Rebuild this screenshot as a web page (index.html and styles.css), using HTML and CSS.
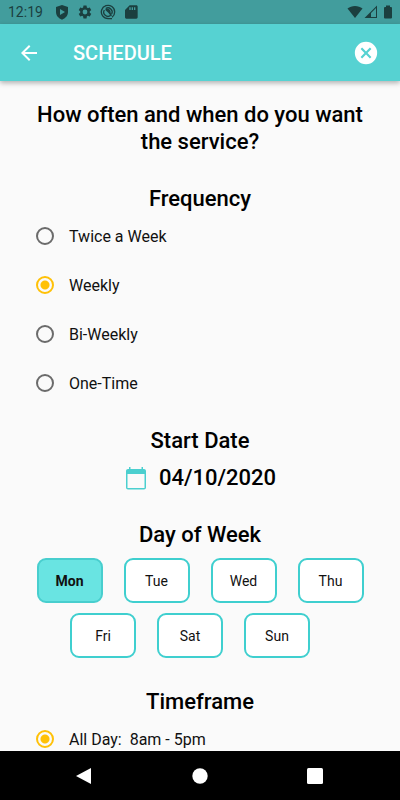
FILE: index.html
```html
<!DOCTYPE html>
<html lang="en">
<head>
<meta charset="utf-8">
<meta name="viewport" content="width=device-width, initial-scale=1">
<title>Schedule</title>
<link rel="stylesheet" href="styles.css">
</head>
<body>
<div class="status-bar">
  <span class="clock">12:19</span>
  <div class="notifications">
    <svg width="16" height="16" viewBox="0 0 24 24" aria-hidden="true"><path fill-rule="evenodd" d="M12 1.500 3 4.500v7.500c0 5.500 3.800 9.500 9 11.500 5.200-2 9-6 9-11.500V4.500zM9 7.500l7.500 4.500L9 16.500z"/></svg>
    <svg width="16" height="16" viewBox="0 0 24 24" aria-hidden="true"><path d="M19.140 12.940c.04-.3.060-.61.060-.94s-.02-.64-.07-.94l2.030-1.580a.49.49 0 0 0 .12-.61l-1.920-3.320a.49.49 0 0 0-.59-.22l-2.390.96c-.5-.38-1.030-.7-1.620-.94l-.36-2.540A.48.48 0 0 0 13.920 2.400h-3.840c-.24 0-.43.17-.47.41l-.36 2.540c-.59.24-1.130.57-1.620.94l-2.390-.96a.48.48 0 0 0-.59.22L2.740 8.870c-.12.21-.08.47.12.61l2.030 1.580c-.05.3-.09.63-.09.94s.02.640.07.940l-2.030 1.580a.49.49 0 0 0-.12.610l1.920 3.320c.12.220.37.290.59.220l2.390-.96c.5.380 1.030.7 1.620.940l.36 2.540c.05.240.24.410.48.410h3.840c.24 0 .44-.17.47-.41l.36-2.540c.59-.24 1.130-.56 1.620-.94l2.390.96c.22.080.47 0 .59-.22l1.920-3.320a.48.48 0 0 0-.12-.61zM12 15.600a3.600 3.600 0 1 1 0-7.200 3.600 3.600 0 0 1 0 7.200z"/></svg>
    <svg width="16" height="16" viewBox="0 0 24 24" aria-hidden="true"><path class="ring" d="M18 20A10 10 0 1 0 12 22H18"/><path class="ring" d="M6.500 9a6.300 6.300 0 0 0 9.500 8M8.500 6.800a6.300 6.300 0 0 1 9 8.200"/><path d="M7.500 8.500c4-3 9-.5 8.500 5l2 3.500-1.500 1.500-4-5.500z"/></svg>
    <svg width="16" height="16" viewBox="0 0 24 24" aria-hidden="true"><path fill-rule="evenodd" d="M20 2H10L3 9v11c0 1.100.9 2 2 2h15c1.100 0 2-.9 2-2V4c0-1.100-.9-2-2-2zM9.500 5h2v4h-2zM13 5h2v4h-2zM16.500 5h2v4h-2z"/></svg>
  </div>
  <div class="signals">
    <svg width="16" height="16" viewBox="0 0 16 16" aria-hidden="true"><path d="M.5 4.500C4.500 1 11.500 1 15.500 4.500L8 14z"/></svg>
    <svg width="14" height="16" viewBox="0 0 14 16" aria-hidden="true"><path fill-rule="evenodd" d="M13 1.500V14H.5zM12 4 7 9V13H12z"/></svg>
    <svg class="battery" width="10" height="16" viewBox="0 0 10 16" aria-hidden="true"><path d="M3 1.500h4V3h1q1 0 1 1v9.500q0 1-1 1H2q-1 0-1-1V4q0-1 1-1h1z"/></svg>
  </div>
</div>
<header class="app-bar">
  <button class="icon-button" type="button" aria-label="Back">
    <svg width="24" height="24" viewBox="0 0 24 24" aria-hidden="true"><path d="M20 11H7.830l5.590-5.590L12 4l-8 8 8 8 1.410-1.410L7.830 13H20z"/></svg>
  </button>
  <h1 class="app-title">SCHEDULE</h1>
  <button class="icon-button" type="button" aria-label="Cancel">
    <svg width="26" height="26" viewBox="0 0 24 24" aria-hidden="true"><path d="M12 1.700A10.300 10.300 0 1 0 22.300 12 10.300 10.300 0 0 0 12 1.700zm5 13.890L15.590 17 12 13.410 8.410 17 7 15.590 10.590 12 7 8.410 8.410 7 12 10.590 15.590 7 17 8.410 13.410 12z"/></svg>
  </button>
</header>
<main class="content">
  <h2 class="heading question">How often and when do you want the service?</h2>

  <h2 class="heading" id="frequency">Frequency</h2>
  <div class="options" role="radiogroup" aria-labelledby="frequency">
    <label class="option"><input class="radio" type="radio" name="frequency">Twice a Week</label>
    <label class="option"><input class="radio" type="radio" name="frequency" checked>Weekly</label>
    <label class="option"><input class="radio" type="radio" name="frequency">Bi-Weekly</label>
    <label class="option"><input class="radio" type="radio" name="frequency">One-Time</label>
  </div>

  <h2 class="heading after-options">Start Date</h2>
  <button class="date" type="button">
    <svg width="24" height="25" viewBox="0 0 24 25" aria-hidden="true"><path d="M20 4h-1V2h-1.500v2h-11V2H5v2H4c-1.100 0-2 .9-2 2v16.500c0 1.100.9 2 2 2h16c1.100 0 2-.9 2-2V6c0-1.100-.9-2-2-2zm.5 19h-17V9h17z"/></svg>
    04/10/2020
  </button>

  <h2 class="heading">Day of Week</h2>
  <div class="days">
    <div class="day-row">
      <button class="day selected" type="button" aria-pressed="true">Mon</button>
      <button class="day" type="button">Tue</button>
      <button class="day" type="button">Wed</button>
      <button class="day" type="button">Thu</button>
    </div>
    <div class="day-row short">
      <button class="day" type="button">Fri</button>
      <button class="day" type="button">Sat</button>
      <button class="day" type="button">Sun</button>
    </div>
  </div>

  <h2 class="heading" id="timeframe">Timeframe</h2>
  <div class="options" role="radiogroup" aria-labelledby="timeframe">
    <label class="option"><input class="radio" type="radio" name="timeframe" checked>All Day:&nbsp; 8am - 5pm</label>
  </div>
</main>
<nav class="system-nav" aria-label="System">
  <button class="nav-button" type="button" aria-label="Back"><svg width="18" height="18" viewBox="0 0 18 18" aria-hidden="true"><path d="M15 1v16L0 9z"/></svg></button>
  <button class="nav-button" type="button" aria-label="Home"><svg width="18" height="18" viewBox="0 0 18 18" aria-hidden="true"><circle cx="9" cy="9" r="7.700"/></svg></button>
  <button class="nav-button" type="button" aria-label="Recent apps"><svg width="18" height="18" viewBox="0 0 18 18" aria-hidden="true"><rect x="1" y="1" width="16" height="16" rx="1.500"/></svg></button>
</nav>
</body>
</html>
```
FILE: styles.css
```css
* {
  box-sizing: border-box;
}

body {
  display: flex;
  flex-direction: column;
  height: 100vh;
  margin: 0;
  background: #fafafa;
  color: #111;
  font-family: Roboto, sans-serif;
}

button {
  padding: 0;
  border: 0;
  background: none;
  color: inherit;
  font: inherit;
}

svg {
  display: block;
  flex: none;
  fill: currentColor;
}

.status-bar {
  display: flex;
  flex: none;
  align-items: center;
  height: 24px;
  padding: 0 7px 0 8px;
  background: #429d9d;
  color: #1b3f3f;
}

.clock {
  font-size: 14px;
  line-height: 24px;
}

.notifications {
  display: flex;
  gap: 7px;
  margin-left: 11px;
}

.ring {
  fill: none;
  stroke: currentColor;
  stroke-width: 2;
}

.signals {
  display: flex;
  gap: 1px;
  margin-left: auto;
}

.battery {
  margin-left: 4px;
}

.app-bar {
  display: flex;
  flex: none;
  align-items: center;
  height: 57px;
  padding: 0 21px 0 17px;
  background: #56d2d2;
  box-shadow: 0 2px 5px rgba(0, 0, 0, 0.3);
  color: #fff;
  z-index: 1;
}

.app-title {
  flex: 1;
  margin: 0 0 0 32px;
  font-size: 20px;
  font-weight: 500;
  line-height: 26px;
}

.content {
  flex: 1;
  min-height: 0;
  padding: 20px 30px 0;
  overflow-y: auto;
  scrollbar-width: none;
}

.heading {
  margin: 30px 0 0;
  color: #000;
  font-size: 22px;
  font-weight: 500;
  line-height: 27px;
  text-align: center;
}

.question {
  margin-top: 0;
}

.after-options {
  margin-top: 19px;
}

.option {
  display: flex;
  align-items: center;
  gap: 15px;
  height: 49px;
  padding: 0 0 1px 6px;
  font-size: 16px;
}

.radio {
  flex: none;
  width: 18px;
  height: 18px;
  margin: 0;
  border: 2px solid #6b6b6b;
  border-radius: 50%;
  appearance: none;
}

.radio:checked {
  border-color: #ffc107;
  background: radial-gradient(circle, #ffc107 4px, transparent 5px);
}

.date {
  display: flex;
  align-items: center;
  gap: 11px;
  margin: 10px auto 0;
  color: #000;
  font-size: 22px;
  font-weight: 500;
  line-height: 27px;
}

.date svg {
  color: #4bcfcf;
}

.days {
  display: grid;
  gap: 10px;
  margin-top: 10px;
}

.day-row {
  display: flex;
  justify-content: center;
  gap: 21px;
}

.short {
  padding-right: 20px;
}

.day {
  width: 66px;
  height: 45px;
  border: 2px solid #3fcfcf;
  border-radius: 9px;
  background: #fff;
  font-size: 14px;
}

.selected {
  border-color: #48cece;
  background: #69e4e2;
  font-weight: 700;
}

.system-nav {
  display: flex;
  flex: none;
  align-items: center;
  justify-content: center;
  gap: 97px;
  height: 49px;
  background: #000;
  color: #fff;
}
```
